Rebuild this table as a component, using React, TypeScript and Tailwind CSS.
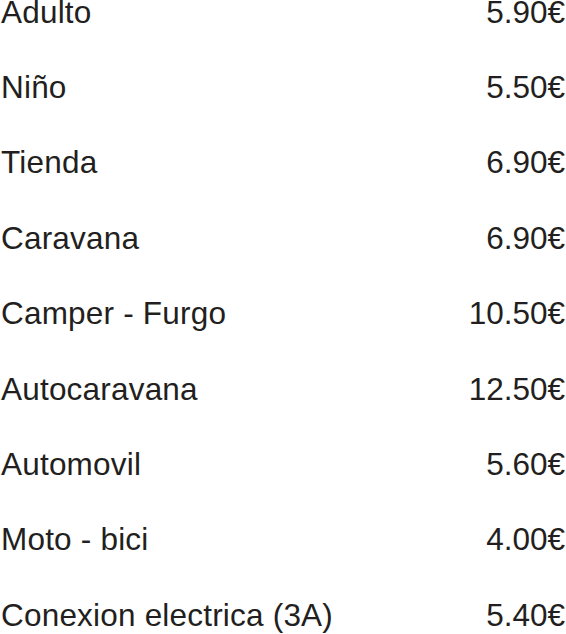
const rows: [string, string][] = [
  ["Adulto", "5.90€"],
  ["Niño", "5.50€"],
  ["Tienda", "6.90€"],
  ["Caravana", "6.90€"],
  ["Camper - Furgo", "10.50€"],
  ["Autocaravana", "12.50€"],
  ["Automovil", "5.60€"],
  ["Moto - bici", "4.00€"],
  ["Conexion electrica (3A)", "5.40€"],
];

export default function App() {
  return (
    <div className="w-[566px] h-[634px] overflow-hidden bg-white">
      <div
        className="mt-[-25.5px] flex flex-col text-[31.5px] leading-[75.4px] text-[#231f20]"
        style={{ fontFamily: '"Liberation Sans", Arial, sans-serif' }}
      >
        {rows.map(([label, price]) => (
          <div key={label} className="flex justify-between pl-[1px] pr-[1px]">
            <span className="tracking-[0.2px]">{label}</span>
            <span>{price}</span>
          </div>
        ))}
      </div>
    </div>
  );
}
